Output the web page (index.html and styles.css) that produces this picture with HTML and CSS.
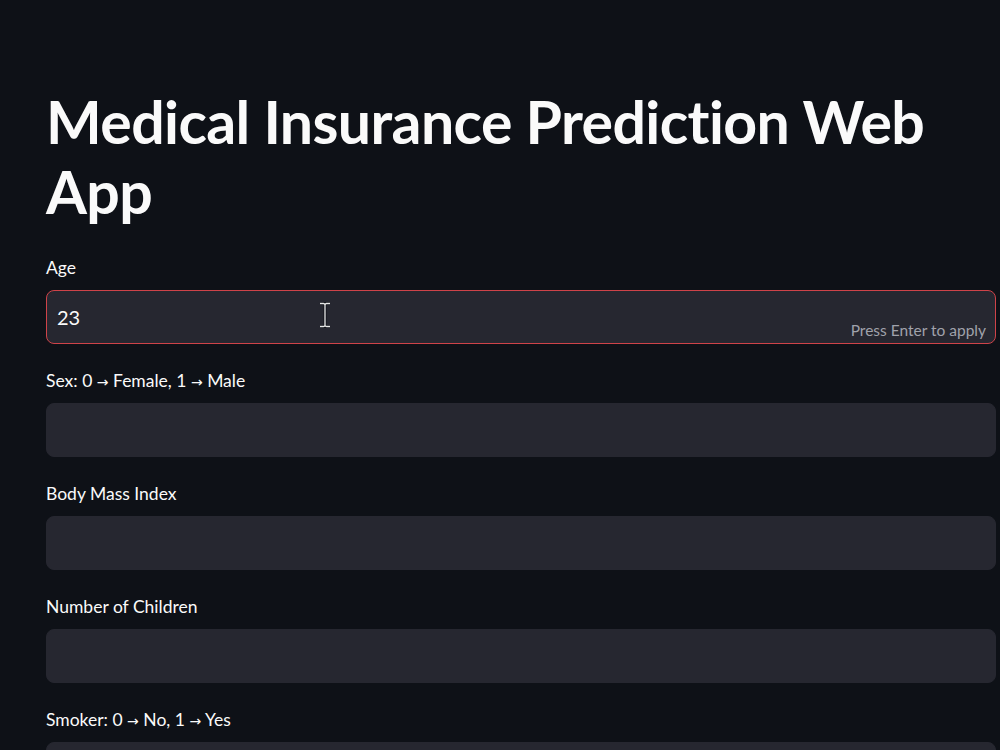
FILE: index.html
```html
<!DOCTYPE html>
<html lang="en">
<head>
<meta charset="utf-8">
<title>Medical Insurance Prediction Web App</title>
<link rel="stylesheet" href="styles.css">
</head>
<body>
<main class="app">
  <h1 class="title">Medical Insurance Prediction Web App</h1>

  <div class="field">
    <label class="field-label" for="age">Age</label>
    <div class="input-wrap focused">
      <input id="age" class="text-input" type="text" value="23">
      <span class="hint">Press Enter to apply</span>
      <svg class="ibeam" width="14" height="26" viewBox="0 0 14 26" aria-hidden="true">
        <path d="M2 1.5h3.5c.8 0 1.5.7 1.5 1.5 0-.8.7-1.5 1.5-1.5H12M7 3v20M2 24.5h3.5c.8 0 1.5-.7 1.5-1.5 0 .8.7 1.5 1.5 1.5H12" fill="none" stroke="#0e1117" stroke-width="3"/>
        <path d="M2 1.5h3.5c.8 0 1.5.7 1.5 1.5 0-.8.7-1.5 1.5-1.5H12M7 3v20M2 24.5h3.5c.8 0 1.5-.7 1.5-1.5 0 .8.7 1.5 1.5 1.5H12" fill="none" stroke="#e8e8e8" stroke-width="1.3"/>
      </svg>
    </div>
  </div>

  <div class="field">
    <label class="field-label" for="sex">Sex: 0 <span class="arrow">→</span> Female, 1 <span class="arrow">→</span> Male</label>
    <div class="input-wrap"><input id="sex" class="text-input" type="text"></div>
  </div>

  <div class="field">
    <label class="field-label" for="bmi">Body Mass Index</label>
    <div class="input-wrap"><input id="bmi" class="text-input" type="text"></div>
  </div>

  <div class="field">
    <label class="field-label" for="children">Number of Children</label>
    <div class="input-wrap"><input id="children" class="text-input" type="text"></div>
  </div>

  <div class="field">
    <label class="field-label" for="smoker">Smoker: 0 <span class="arrow">→</span> No, 1 <span class="arrow">→</span> Yes</label>
    <div class="input-wrap"><input id="smoker" class="text-input" type="text"></div>
  </div>
</main>
</body>
</html>
```

FILE: styles.css
```css
html, body {
  margin: 0;
  padding: 0;
  background: #0e1117;
  height: 100%;
  overflow: hidden;
}

body {
  font-family: "Lato", "Noto Sans", sans-serif;
  color: #fafafa;
}

.app {
  padding: 87px 4px 0 46px;
  display: flex;
  flex-direction: column;
}

.title {
  margin: 0 0 30px 0;
  font-size: 59px;
  line-height: 70px;
  font-weight: 700;
  letter-spacing: -0.6px;
  color: #fafafa;
  max-width: 920px;
}

.field {
  display: flex;
  flex-direction: column;
  gap: 11px;
  margin-bottom: 26px;
}

.field-label {
  display: block;
  height: 22px;
  font-size: 17.5px;
  line-height: 22px;
  color: #fafafa;
}

/* arrows are drawn a little smaller than the label text */
.arrow {
  font-size: 14px;
  line-height: 0;
  font-family: "DejaVu Sans", sans-serif;
}

.input-wrap {
  position: relative;
  height: 54px;
  border-radius: 8px;
  background: #262730;
  border: 1px solid #262730;
  box-sizing: border-box;
}

.input-wrap.focused {
  border-color: #cf4349;
}

.text-input {
  width: 100%;
  height: 100%;
  box-sizing: border-box;
  padding: 0 10px;
  border: none;
  outline: none;
  background: transparent;
  color: #fafafa;
  font-family: inherit;
  font-size: 20px;
}

.hint {
  position: absolute;
  right: 9px;
  bottom: 3px;
  font-size: 15.5px;
  line-height: 20px;
  color: #a0a2ab;
}

.ibeam {
  position: absolute;
  left: 271px;
  top: 11px;
}
```
